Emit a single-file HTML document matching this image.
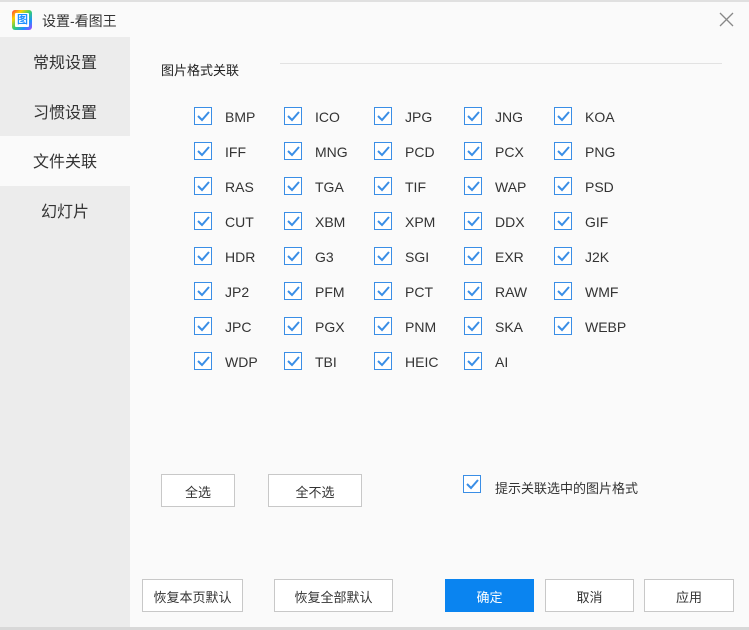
<!DOCTYPE html>
<html><head><meta charset="utf-8"><style>
*{margin:0;padding:0;box-sizing:border-box}
body{width:749px;height:630px;background:#fafafa;font-family:"Liberation Sans","Noto Sans CJK SC",sans-serif;position:relative;overflow:hidden;color:#333}
.a{position:absolute}
.side{left:0;top:37px;width:130px;height:590px;background:#ececec}
.si{position:absolute;left:0;width:130px;height:50px;line-height:54px;text-align:center;font-size:16px;color:#333}
.cb{position:absolute;width:18px;height:18px;border:1.5px solid #3a8ee6;background:#fff}
.cb svg{position:absolute;left:1px;top:1px}
.lb{position:absolute;font-size:14px;color:#333;line-height:19px}
.btn{position:absolute;border:1px solid #c8c8c8;background:#fff;font-size:13px;text-align:center;color:#333}
</style></head><body>
<div class="a" style="left:0;top:0;width:749px;height:2px;background:#e0e0e0"></div>
<div class="a" style="left:12px;top:10px;width:20px;height:20px;border-radius:3px;background:linear-gradient(135deg,#ff3b3b,#ffd000,#36d06a,#1e90ff,#b040ff)"></div>
<div class="a" style="left:15px;top:13px;width:14px;height:14px;background:#fff;border-radius:1px"></div>
<div class="a" style="left:17px;top:14px;font-size:11px;line-height:12px;color:#1e90ff;font-weight:bold">图</div>
<div class="a" style="left:42px;top:11px;font-size:14px;color:#333">设置-看图王</div>
<svg class="a" style="left:719px;top:12px" width="15" height="15"><path d="M1 1L14 14M14 1L1 14" stroke="#888" stroke-width="1.3"/></svg>
<div class="a side">
<div class="si" style="top:0">常规设置</div>
<div class="si" style="top:50px">习惯设置</div>
<div class="si" style="top:99px;background:#fafafa">文件关联</div>
<div class="si" style="top:149px">幻灯片</div>
</div>
<div class="a" style="left:161px;top:60px;font-size:13px;color:#222">图片格式关联</div>
<div class="a" style="left:280px;top:63px;width:442px;height:1px;background:#e2e2e2"></div>
<div id="g"></div>
<script>
var rows=[["BMP","ICO","JPG","JNG","KOA"],["IFF","MNG","PCD","PCX","PNG"],["RAS","TGA","TIF","WAP","PSD"],["CUT","XBM","XPM","DDX","GIF"],["HDR","G3","SGI","EXR","J2K"],["JP2","PFM","PCT","RAW","WMF"],["JPC","PGX","PNM","SKA","WEBP"],["WDP","TBI","HEIC","AI"]];
var ck='<svg width="14" height="14"><path d="M2 7L6 11L13 3" fill="none" stroke="#3a8ee6" stroke-width="2"/></svg>';
var h='';
rows.forEach(function(r,i){r.forEach(function(t,j){var x=194+j*90,y=107+i*35;
h+='<div class="cb" style="left:'+x+'px;top:'+y+'px">'+ck+'</div><div class="lb" style="left:'+(x+31)+'px;top:'+(y+1)+'px">'+t+'</div>';});});
h+='<div class="cb" style="left:463px;top:475px">'+ck+'</div>';
document.getElementById('g').innerHTML=h;
</script>
<div class="a" style="left:495px;top:478px;font-size:13px">提示关联选中的图片格式</div>
<div class="btn" style="left:161px;top:474px;width:74px;height:33px;line-height:35px">全选</div>
<div class="btn" style="left:268px;top:474px;width:94px;height:33px;line-height:35px">全不选</div>
<div class="btn" style="left:142px;top:579px;width:101px;height:33px;line-height:35px">恢复本页默认</div>
<div class="btn" style="left:274px;top:579px;width:119px;height:33px;line-height:35px">恢复全部默认</div>
<div class="btn" style="left:445px;top:579px;width:89px;height:33px;line-height:37px;background:#0a84f0;border:none;color:#fff">确定</div>
<div class="btn" style="left:545px;top:579px;width:89px;height:33px;line-height:35px">取消</div>
<div class="btn" style="left:644px;top:579px;width:90px;height:33px;line-height:35px">应用</div>
<div class="a" style="left:0;top:627px;width:749px;height:3px;background:#d8d8d8"></div>
</body></html>
